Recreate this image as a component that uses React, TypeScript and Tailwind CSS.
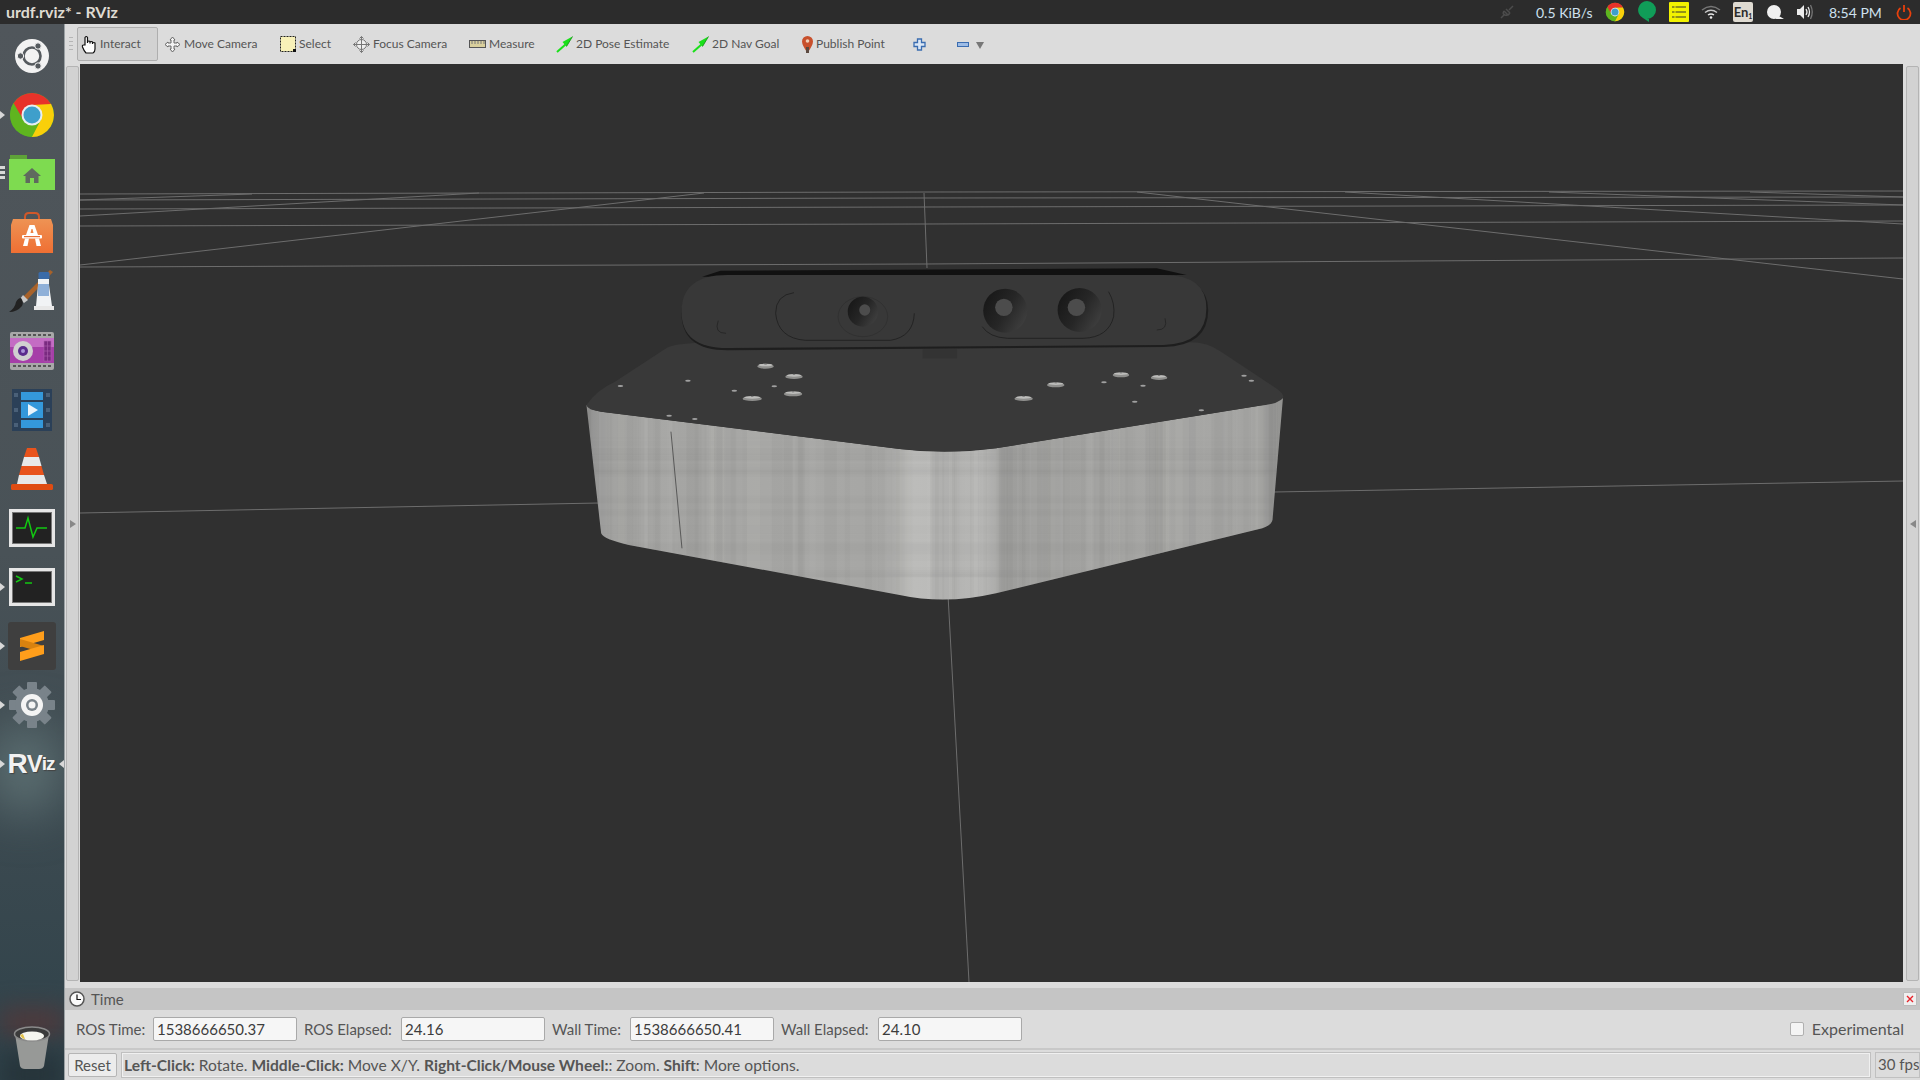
import { ReactNode } from "react";

const uiFont = "font-['Lato','Noto_Sans',sans-serif]";

function Pip({ className }: { className: string }) {
  return (
    <span
      className={`absolute w-0 h-0 border-y-[4px] border-y-transparent border-l-[5px] border-l-[#d8d8d8] ${className}`}
    />
  );
}

function ChromeIcon({ size }: { size: number }) {
  const red = "M24 14H43.6A22 22 0 0 0 5 13L15.3 29Z";
  return (
    <svg width={size} height={size} viewBox="0 0 48 48">
      <circle cx="24" cy="24" r="22" fill="#4caf2f" />
      <path d={red} fill="#e8322a" />
      <path d={red} fill="#f9cf0a" transform="rotate(120 24 24)" />
      <path d={red} fill="#5fb51f" transform="rotate(240 24 24)" />
      <circle cx="24" cy="24" r="10.5" fill="#e8eef2" />
      <circle cx="24" cy="24" r="8.5" fill="#3e9fcb" />
    </svg>
  );
}

function UbuntuIcon() {
  return (
    <svg width="36" height="36" viewBox="0 0 36 36">
      <circle cx="18" cy="18" r="17" fill="#f2f2f2" />
      <circle cx="18" cy="18" r="8.5" fill="none" stroke="#555a5e" strokeWidth="2.6" />
      <circle cx="6.5" cy="18" r="3.2" fill="#555a5e" stroke="#f2f2f2" />
      <circle cx="24" cy="8" r="3.2" fill="#555a5e" stroke="#f2f2f2" />
      <circle cx="24" cy="28" r="3.2" fill="#555a5e" stroke="#f2f2f2" />
    </svg>
  );
}

function FolderIcon() {
  return (
    <svg width="48" height="38" viewBox="0 0 48 38">
      <path d="M2 0H19V6H2Z" fill="#5ea238" />
      <rect x="1" y="4" width="46" height="31" fill="#7edb50" />
      <path d="M24 13L33 21H30.5V28H26V23H22V28H17.500V21H15Z" fill="#5f6b5e" />
    </svg>
  );
}

function BagIcon() {
  return (
    <svg width="44" height="44" viewBox="0 0 44 44">
      <path d="M15 12V6Q15 2 19 2H25Q29 2 29 6V12" fill="none" stroke="#d0582a" strokeWidth="2" />
      <path d="M3 8H41L43 14V42H1V14Z" fill="url(#bagFill)" />
      <path d="M19.500 14H24.500L28 24H16Z" fill="#fff" />
      <path d="M21.500 18H22.500L23.500 22H20.500Z" fill="#ee8446" />
      <rect x="12" y="24" width="20" height="3.500" rx="1" fill="#fff" />
      <rect x="14" y="25" width="16" height="1.200" fill="#e8703a" />
      <path d="M15 27.500H19L17.500 35H13Z" fill="#fff" />
      <path d="M25 27.500H29L31 35H26.500Z" fill="#fff" />
      <defs>
        <linearGradient id="bagFill" x1="0" y1="0" x2="0" y2="1">
          <stop offset="0" stopColor="#ee9354" />
          <stop offset="1" stopColor="#ef6f33" />
        </linearGradient>
      </defs>
    </svg>
  );
}

function PaintIcon() {
  return (
    <svg width="46" height="44" viewBox="0 0 46 44">
      <path d="M41 0L44 2L18 30L14 27Z" fill="#a8622a" />
      <path d="M14 25L19 30L15 33L11 29Z" fill="#c8c8c8" />
      <path d="M12 28Q15 32 13 36Q8 42 0 42Q6 38 7 32Q9 28 12 28Z" fill="#222" />
      <path d="M29 9H40V15L43 36H27L29 15Z" fill="#f1f3f5" />
      <rect x="29.500" y="2" width="11" height="7" rx="1.500" fill="#3a6ba8" />
      <rect x="29" y="14" width="11" height="12" fill="#8fb0d8" />
      <rect x="25" y="36" width="20" height="4" fill="#e8e8e8" />
    </svg>
  );
}

function CameraIcon() {
  const holes = [4, 9, 14, 19, 24, 29, 34, 39];
  return (
    <svg width="46" height="40" viewBox="0 0 46 40">
      <rect x="1" y="1" width="44" height="38" rx="2" fill="#a8a8a8" />
      <rect x="1" y="7" width="44" height="25" fill="#a63fa8" />
      <rect x="1" y="7" width="44" height="9" fill="#c46cc4" />
      {holes.map((x) => (
        <g key={x}>
          <rect x={x} y="3" width="3" height="2" fill="#555" />
          <rect x={x} y="34" width="3" height="2" fill="#555" />
        </g>
      ))}
      <circle cx="14" cy="20" r="10" fill="#d0d0d0" />
      <circle cx="14" cy="20" r="5" fill="#5a2c8c" />
      <circle cx="14" cy="20" r="2" fill="#a994d8" />
      <path d="M35 10H42V30H35ZM35 15H42M35 20H42M35 25H42M38.500 10V30" fill="#7a2a80" stroke="#b060b0" strokeWidth="0.600" />
    </svg>
  );
}

function VideoIcon() {
  return (
    <svg width="40" height="42" viewBox="0 0 40 42">
      <rect width="40" height="42" fill="#2b4058" />
      <rect x="9" y="3" width="22" height="8" fill="#3498db" />
      <rect x="9" y="13" width="22" height="16" fill="#3498db" />
      <rect x="9" y="31" width="22" height="8" fill="#3498db" />
      <path d="M16 15L26 21L16 27Z" fill="#eaf4fb" />
      <rect x="2" y="4" width="4" height="4" fill="#4a6078" />
      <rect x="2" y="19" width="4" height="4" fill="#4a6078" />
      <rect x="2" y="34" width="4" height="4" fill="#4a6078" />
      <rect x="34" y="4" width="4" height="4" fill="#4a6078" />
      <rect x="34" y="19" width="4" height="4" fill="#4a6078" />
      <rect x="34" y="34" width="4" height="4" fill="#4a6078" />
    </svg>
  );
}

function ConeIcon() {
  return (
    <svg width="44" height="44" viewBox="0 0 44 44">
      <path d="M17 1H26L29 10H14Z" fill="#e8531c" />
      <path d="M14 10H29L31.500 19H11.500Z" fill="#e8e8e8" />
      <path d="M11.500 19H31.500L34 28H9Z" fill="#e8531c" />
      <path d="M9 28H34L37 37H7Z" fill="#e8e8e8" />
      <rect x="1" y="37" width="42" height="6" rx="1.500" fill="#e04c12" />
    </svg>
  );
}

function MonitorIcon() {
  return (
    <svg width="46" height="38" viewBox="0 0 46 38">
      <rect x="1.500" y="1.500" width="43" height="35" fill="#222" stroke="#e6e6e6" strokeWidth="3" />
      <rect x="3.500" y="3.500" width="39" height="31" fill="none" stroke="#777" />
      <path d="M7 19H16L19 9L24 28L28 19H38" fill="none" stroke="#12c812" strokeWidth="1.500" />
    </svg>
  );
}

function TerminalIcon() {
  return (
    <svg width="46" height="38" viewBox="0 0 46 38">
      <rect x="1.500" y="1.500" width="43" height="35" fill="#222" stroke="#e6e6e6" strokeWidth="3" />
      <rect x="3.500" y="3.500" width="39" height="31" fill="none" stroke="#777" />
      <path d="M7 8L13 11L7 14" fill="none" stroke="#12c812" strokeWidth="1.500" />
      <path d="M16 15H23" stroke="#12c812" strokeWidth="1.500" />
    </svg>
  );
}

function SublimeIcon() {
  return (
    <svg width="48" height="48" viewBox="0 0 48 48">
      <rect width="48" height="48" rx="3" fill="#3f3f3f" />
      <path d="M12 16L36 9V18L12 25Z" fill="#ff9e1b" />
      <path d="M12 24L36 31V24L12 17Z" fill="#d9820f" />
      <path d="M12 30L36 23V32L12 39Z" fill="#ff9e1b" />
    </svg>
  );
}

function GearIcon() {
  const teeth = [0, 45, 90, 135, 180, 225, 270, 315];
  return (
    <svg width="46" height="46" viewBox="0 0 46 46">
      {teeth.map((deg) => (
        <rect key={deg} x="18" y="0" width="10" height="12" rx="1" fill="#79838a" transform={`rotate(${deg} 23 23)`} />
      ))}
      <circle cx="23" cy="23" r="17" fill="#79838a" />
      <circle cx="23" cy="23" r="11" fill="#f4f4f4" />
      <circle cx="23" cy="23" r="6" fill="#79838a" />
      <circle cx="23" cy="23" r="3.500" fill="#f4f4f4" />
    </svg>
  );
}

function TrashIcon() {
  return (
    <svg width="38" height="44" viewBox="0 0 38 44">
      <path d="M2 8L7 40Q8 43 12 43H26Q30 43 31 40L36 8Z" fill="#979997" />
      <ellipse cx="19" cy="8" rx="17.500" ry="7" fill="#3b3b3b" stroke="#8a8a8a" strokeWidth="1.500" />
      <ellipse cx="19" cy="10" rx="12" ry="4.500" fill="#f6f6f0" />
      <path d="M7 9Q9 13 12 13L10 8Z" fill="#e3c24a" />
    </svg>
  );
}

const launcher: { icon: ReactNode; pip?: string }[] = [
  { icon: <UbuntuIcon /> },
  { icon: <ChromeIcon size={48} />, pip: "single" },
  { icon: <FolderIcon />, pip: "multi" },
  { icon: <BagIcon /> },
  { icon: <PaintIcon /> },
  { icon: <CameraIcon /> },
  { icon: <VideoIcon /> },
  { icon: <ConeIcon /> },
  { icon: <MonitorIcon /> },
  { icon: <TerminalIcon />, pip: "single" },
  { icon: <SublimeIcon />, pip: "single" },
  { icon: <GearIcon />, pip: "single" },
];

function Launcher() {
  return (
    <aside className="relative w-[65px] shrink-0 overflow-hidden bg-gradient-to-b from-[#50565b] via-[#495257] to-[#2f424a] border-r border-[#9aa0a3]">
      <div className="absolute left-[-10px] top-[700px] w-[70px] h-[90px] rounded-full bg-[#5c6f72] blur-xl" />
      <div className="absolute left-0 top-[985px] w-[65px] h-[26px] bg-[#51383a] blur-md" />
      <div className="absolute left-0 top-[1030px] w-[65px] h-[40px] bg-[#26343a] blur-md" />
      <div className="relative flex flex-col pt-[2px]">
        {launcher.map((item, i) => (
          <div key={i} className="relative h-[59px] flex items-center justify-center">
            {item.pip === "single" && <Pip className="left-0 top-[26px]" />}
            {item.pip === "multi" && (
              <>
                <span className="absolute left-0 top-[22px] w-[5px] h-[3px] bg-[#d8d8d8]" />
                <span className="absolute left-0 top-[27px] w-[5px] h-[3px] bg-[#d8d8d8]" />
                <span className="absolute left-0 top-[32px] w-[5px] h-[3px] bg-[#d8d8d8]" />
              </>
            )}
            {item.icon}
          </div>
        ))}
        <div className="relative h-[59px] flex items-center justify-center pr-[2px]">
          <Pip className="left-0 top-[26px]" />
          <span className="font-['Liberation_Sans',sans-serif] font-bold leading-none text-[#f2f2f2] tracking-[-1px] [text-shadow:1px_1px_1px_#444] flex items-center">
            <span className="text-[28px]">R</span>
            <span className="text-[24px]">V</span>
            <span className="text-[19px]">iz</span>
          </span>
          <span className="absolute right-0 top-[26px] w-0 h-0 border-y-[4px] border-y-transparent border-r-[5px] border-r-[#d8d8d8]" />
        </div>
      </div>
      <div className="absolute left-[13px] bottom-[10px]">
        <TrashIcon />
      </div>
    </aside>
  );
}

function TopBar() {
  return (
    <header className={`h-[24px] bg-[#2c2c2c] flex items-center text-[#dfdbd2] ${uiFont}`}>
      <span className="ml-[6px] font-bold text-[16px]">urdf.rviz* - RViz</span>
      <div className="ml-auto flex items-center">
        <svg width="16" height="16" viewBox="0 0 16 16" className="mr-[21px]">
          <path d="M2 14L6 10M10 6L14 2M5 7L9 11M7 5L11 9M5 7Q3 10 6 11Q9 12 11 9" fill="none" stroke="#4c4c4c" strokeWidth="1.500" />
        </svg>
        <span className="w-[69px] text-[14px] text-[#cfe0ee]">0.5 KiB/s</span>
        <ChromeIcon size={20} />
        <svg width="18" height="22" viewBox="0 0 18 22" className="ml-[13px]">
          <path d="M9 0A9 9 0 1 1 9 18H11V21L5 17A9 9 0 0 1 9 0Z" fill="#109d58" />
        </svg>
        <svg width="20" height="20" viewBox="0 0 20 20" className="ml-[13px]">
          <rect width="20" height="20" rx="1" fill="#f2f200" />
          <path d="M3 5H17M3 10H17M3 15H17" stroke="#333" strokeWidth="1.200" />
          <path d="M6 3V17" stroke="#f2f200" strokeWidth="1" />
        </svg>
        <svg width="20" height="14" viewBox="0 0 20 14" className="ml-[12px]">
          <path d="M1 5Q10 -2 19 5" fill="none" stroke="#777" strokeWidth="1.500" />
          <path d="M4 7.500Q10 3 16 7.500" fill="none" stroke="#c8c8c8" strokeWidth="1.500" />
          <path d="M7 10Q10 8 13 10" fill="none" stroke="#e8e8e8" strokeWidth="1.500" />
          <circle cx="10" cy="12.500" r="1.300" fill="#eee" />
        </svg>
        <span className="ml-[12px] w-[20px] h-[20px] rounded-[2px] bg-[#dfdbd2] text-[#2c2c2c] text-[13px] font-bold leading-[20px] text-center">
          En<sub className="text-[7px]">1</sub>
        </span>
        <svg width="18" height="16" viewBox="0 0 18 16" className="ml-[13px]">
          <path d="M8 1A7 7 0 1 1 8 15A7 7 0 0 1 8 1ZM13 12L18 15H10Z" fill="#f0f0f0" />
        </svg>
        <svg width="18" height="16" viewBox="0 0 18 16" className="ml-[12px]">
          <path d="M1 5H4L8 1V15L4 11H1Z" fill="#ececec" />
          <path d="M10 5Q12 8 10 11M12 3Q15 8 12 13" fill="none" stroke="#ececec" strokeWidth="1.300" />
          <path d="M14.500 1Q18 8 14.500 15" fill="none" stroke="#777" strokeWidth="1.300" />
        </svg>
        <span className="ml-[15px] w-[67px] text-[14px] text-[#cfe0ee]">8:54 PM</span>
        <svg width="16" height="16" viewBox="0 0 16 16" className="mr-[8px]">
          <path d="M4.500 4A6.500 6.500 0 1 0 11.500 4" fill="none" stroke="#e8400c" strokeWidth="1.800" />
          <path d="M8 1V8" stroke="#e8400c" strokeWidth="1.800" />
        </svg>
      </div>
    </header>
  );
}

function HandIcon() {
  return (
    <svg width="17" height="19" viewBox="0 0 17 19">
      <path
        d="M4 10V2.500Q5.300 0.500 6.500 2.500V8V6.500Q8 5.500 9 6.500V8.500V7Q10.500 6 11.500 7V9V8Q13 7 14 8V14Q14 17 12 18H5Q3 16 1.500 12Q1 10 2.500 10Z"
        fill="#fff"
        stroke="#111"
        strokeWidth="1.200"
      />
    </svg>
  );
}

function MoveIcon() {
  return (
    <svg width="17" height="17" viewBox="0 0 17 17" fill="none" stroke="#666" strokeWidth="1">
      <path d="M8.500 1L11 4H10V7H13V6L16 8.500L13 11V10H10V13H11L8.500 16L6 13H7V10H4V11L1 8.500L4 6V7H7V4H6Z" fill="#f3f3f3" />
    </svg>
  );
}

function SelectIcon() {
  return (
    <svg width="16" height="16" viewBox="0 0 16 16">
      <rect x="0.500" y="0.500" width="15" height="15" fill="#f8f1b8" stroke="#222" strokeDasharray="2 1" />
      <rect x="13" y="13" width="3" height="3" fill="#111" />
    </svg>
  );
}

function FocusIcon() {
  return (
    <svg width="17" height="17" viewBox="0 0 17 17" fill="none" stroke="#777" strokeWidth="1">
      <circle cx="8.500" cy="8.500" r="5" fill="#efefef" />
      <path d="M8.500 0.500V16.500M0.500 8.500H16.500" />
      <path d="M6.500 2.500L8.500 0.500L10.500 2.500M6.500 14.500L8.500 16.500L10.500 14.500M2.500 6.500L0.500 8.500L2.500 10.500M14.500 6.500L16.500 8.500L14.500 10.500" />
    </svg>
  );
}

function RulerIcon() {
  return (
    <svg width="17" height="8" viewBox="0 0 17 8">
      <rect x="0.500" y="0.500" width="16" height="7" fill="#d9cf9c" stroke="#555" />
      <path d="M3 1V4M6 1V4M9 1V4M12 1V4M15 1V4" stroke="#777" />
    </svg>
  );
}

function ArrowIcon() {
  return (
    <svg width="17" height="17" viewBox="0 0 17 17">
      <path d="M1 16L9.500 8.500" stroke="#19e019" strokeWidth="2" />
      <path d="M16.500 0.500L6.500 6L10.500 10.500Z" fill="#19e019" />
      <path d="M16.500 0.500L10.500 10.500" stroke="#118a11" strokeWidth="0.800" />
    </svg>
  );
}

function PinIcon() {
  return (
    <svg width="11" height="17" viewBox="0 0 11 17">
      <path d="M5.500 0A5.500 5.500 0 0 1 11 5.500Q11 9 5.500 17Q0 9 0 5.500A5.500 5.500 0 0 1 5.500 0Z" fill="#c8502c" />
      <path d="M5.500 11V17" stroke="#5c4a40" strokeWidth="3" />
      <circle cx="5.500" cy="5" r="1.800" fill="#f0d0b8" />
    </svg>
  );
}

const tools = [
  { label: "Move Camera", icon: <MoveIcon />, width: "w-[116px]" },
  { label: "Select", icon: <SelectIcon />, width: "w-[73px]" },
  { label: "Focus Camera", icon: <FocusIcon />, width: "w-[116px]" },
  { label: "Measure", icon: <RulerIcon />, width: "w-[87px]" },
  { label: "2D Pose Estimate", icon: <ArrowIcon />, width: "w-[136px]" },
  { label: "2D Nav Goal", icon: <ArrowIcon />, width: "w-[110px]" },
  { label: "Publish Point", icon: <PinIcon />, width: "w-[111px]" },
];

function Toolbar() {
  return (
    <div className={`h-[40px] bg-[#dcdcdc] flex items-center text-[12px] text-[#555] ${uiFont}`}>
      <div className="ml-[4px] w-[4px] h-[14px] bg-[repeating-linear-gradient(#b5b5b5_0_1px,transparent_1px_4px)]" />
      <button className="ml-[4px] mr-[2px] w-[81px] h-[34px] flex items-center gap-[2px] pl-[3px] bg-[#d2d2d2] border border-[#aeaeae] rounded-[2px]">
        <HandIcon />
        Interact
      </button>
      {tools.map((tool) => (
        <button key={tool.label} className={`${tool.width} h-[34px] flex items-center gap-[3px] pl-[4px] whitespace-nowrap`}>
          {tool.icon}
          {tool.label}
        </button>
      ))}
      <span className="w-[44px] pl-[4px]">
        <svg width="13" height="13" viewBox="0 0 13 13" className="block">
          <path d="M4.500 1H8.500V4.500H12V8.500H8.500V12H4.500V8.500H1V4.500H4.500Z" fill="#dbe7f6" stroke="#3a6cb0" strokeWidth="1.300" />
        </svg>
      </span>
      <span className="pl-[4px] flex items-center gap-[7px]">
        <svg width="12" height="5" viewBox="0 0 12 5" className="block">
          <rect x="0.500" y="0.500" width="11" height="4" fill="#9dbce6" stroke="#3a6cb0" />
        </svg>
        <span className="mt-[2px] w-0 h-0 border-x-[4px] border-x-transparent border-t-[7px] border-t-[#777]" />
      </span>
    </div>
  );
}

const screws = [
  [428, 347, 18], [490, 378, 19], [488, 430, 20], [399, 444, 21], [1202, 373, 18],
  [1285, 381, 18], [1060, 403, 19], [990, 444, 20],
];
const dots = [
  [112, 408], [259, 392], [360, 422], [447, 409], [218, 497], [274, 507],
  [1470, 377], [1486, 392], [1165, 397], [1250, 407], [1232, 455], [1377, 481],
];

// pseudo random streaks for the brushed look of the box side
const streaks = Array.from({ length: 140 }, (_, i) => {
  const a = Math.abs(Math.sin(i * 12.9898) * 43758.5453) % 1;
  const b = Math.abs(Math.sin(i * 78.233) * 12543.123) % 1;
  return { x: 40 + a * 1500, w: 5 + b * 26, dark: i % 2 === 0, o: 0.02 + b * 0.05 };
});
const bands = Array.from({ length: 24 }, (_, i) => {
  const a = Math.abs(Math.sin(i * 31.7) * 9182.3) % 1;
  const b = Math.abs(Math.sin(i * 5.3) * 7719.1) % 1;
  return { y: 560 + a * 440, h: 8 + b * 24, o: 0.008 + b * 0.02 };
});

function Scene() {
  const line = "#6d6d6d";
  const gridLines = [
    [81, 194, 925, 192], [925, 192, 1904, 191],
    [81, 200, 925, 198], [925, 198, 1904, 197],
    [81, 209, 925, 207], [925, 207, 1904, 205],
    [81, 226, 925, 224], [925, 224, 1904, 221],
    [81, 267, 925, 264], [925, 264, 1904, 258],
    [81, 200, 253, 194], [81, 216, 480, 193], [81, 265, 705, 193],
    [1138, 192, 1904, 279], [1346, 192, 1904, 224], [1550, 192, 1904, 205], [1751, 192, 1904, 197],
    [925, 193, 928, 268],
    [81, 513, 600, 503], [1275, 492, 1904, 481],
    [949, 595, 970, 982],
  ];
  return (
    <svg viewBox="81 64 1823 918" className="block w-full h-full">
      <defs>
        <linearGradient id="sideFill" x1="0" y1="0" x2="1" y2="0">
          <stop offset="0" stopColor="#8d8d8c" />
          <stop offset="0.04" stopColor="#a3a3a1" />
          <stop offset="0.3" stopColor="#a9a9a7" />
          <stop offset="0.44" stopColor="#a6a6a4" />
          <stop offset="0.47" stopColor="#bcbcba" />
          <stop offset="0.56" stopColor="#b9b9b7" />
          <stop offset="0.6" stopColor="#a0a09e" />
          <stop offset="0.95" stopColor="#a8a8a6" />
          <stop offset="1" stopColor="#8c8c8b" />
        </linearGradient>
        <linearGradient id="lens" x1="0" y1="0" x2="1" y2="0.6">
          <stop offset="0" stopColor="#141414" />
          <stop offset="0.6" stopColor="#262626" />
          <stop offset="1" stopColor="#3c3c3c" />
        </linearGradient>
        <clipPath id="sideClip">
          <path d="M38 465L70 850Q75 868 130 885L720 1035Q820 1065 930 1030L1510 835Q1530 825 1532 810L1555 440Q1540 460 1500 468L930 595Q820 615 720 597L70 485Q45 480 38 465Z" />
        </clipPath>
      </defs>
      {gridLines.map(([x1, y1, x2, y2], i) => (
        <line key={i} x1={x1} y1={y1} x2={x2} y2={y2} stroke={line} strokeWidth="1" />
      ))}
      {/* drawn in the coordinates of a crop of the model, squeezed back to screen */}
      <g transform="translate(570 250) scale(0.4592 0.3333)">
        <path d="M38 465L70 850Q75 868 130 885L720 1035Q820 1065 930 1030L1510 835Q1530 825 1532 810L1555 440Q1540 460 1500 468L930 595Q820 615 720 597L70 485Q45 480 38 465Z" fill="url(#sideFill)" />
        <g clipPath="url(#sideClip)">
          {streaks.map((s, i) => (
            <rect key={i} x={s.x} y="440" width={s.w} height="640" fill={s.dark ? "#6e6e6e" : "#dadad8"} opacity={s.o} />
          ))}
          {bands.map((b, i) => (
            <rect key={i} x="0" y={b.y} width="1600" height={b.h} fill="#777" opacity={b.o} />
          ))}
          <path d="M222 545L246 895" stroke="#444" strokeWidth="2" />
        </g>
        <path d="M38 465Q60 420 100 395L215 292Q240 278 300 278H1340Q1385 272 1420 305L1540 415Q1565 440 1550 450Q1535 465 1500 468L930 595Q820 612 720 597L70 485Q40 480 38 465Z" fill="#393939" />
        {dots.map(([x, y], i) => (
          <ellipse key={i} cx={x} cy={y} rx="6" ry="3" fill="#a0a0a0" />
        ))}
        {screws.map(([x, y, r], i) => (
          <g key={i}>
            <ellipse cx={x} cy={y + 2} rx={r} ry="7" fill="#8f8f8d" />
            <ellipse cx={x} cy={y - 2} rx={r * 0.85} ry="4" fill="#bdbdbb" />
            <ellipse cx={x} cy={y - 5} rx="3" ry="1.500" fill="#6a6a6a" />
          </g>
        ))}
        <path d="M770 298H845V325H770Z" fill="#333" />
        <path d="M290 80L330 62L1280 55L1345 75Z" fill="#111" />
        <path d="M345 85H1295Q1392 85 1392 180Q1392 288 1295 291L345 301Q245 301 245 190Q245 85 345 85Z" fill="#1e1e1e" />
        <path d="M345 75H1295Q1388 75 1388 175Q1388 282 1295 285L345 294Q245 294 245 185Q245 75 345 75Z" fill="#383838" />
        <path d="M490 128Q450 135 450 190Q455 265 515 271H700Q750 260 752 190" fill="none" stroke="#1d1d1d" strokeWidth="2" />
        <path d="M1175 125Q1190 160 1186 200Q1175 262 1120 265H955Q915 262 900 230" fill="none" stroke="#1d1d1d" strokeWidth="2" />
        <ellipse cx="640" cy="200" rx="54" ry="60" fill="none" stroke="#2c2c2c" strokeWidth="1.500" />
        <ellipse cx="640" cy="185" rx="33" ry="45" fill="url(#lens)" />
        <ellipse cx="644" cy="180" rx="12" ry="17" fill="#4c4c4c" />
        <ellipse cx="950" cy="182" rx="48" ry="66" fill="url(#lens)" />
        <ellipse cx="947" cy="172" rx="19" ry="26" fill="#4c4c4c" />
        <ellipse cx="1112" cy="180" rx="48" ry="66" fill="url(#lens)" />
        <ellipse cx="1105" cy="172" rx="19" ry="26" fill="#4c4c4c" />
        <path d="M325 212Q315 250 342 250" fill="none" stroke="#222" strokeWidth="2" />
        <path d="M1298 205Q1305 240 1280 240" fill="none" stroke="#222" strokeWidth="2" />
      </g>
    </svg>
  );
}

function TimeField({ label, value, labelClass, inputClass }: { label: string; value: string; labelClass: string; inputClass: string }) {
  return (
    <>
      <span className={`${labelClass} whitespace-nowrap`}>{label}</span>
      <span className={`${inputClass} h-[24px] bg-[#f6f6f6] border border-[#a9a9a9] rounded-[2px] pl-[3px] leading-[22px] text-[#3c3c3c]`}>
        {value}
      </span>
    </>
  );
}

function TimePanel() {
  return (
    <div className={`h-[98px] bg-[#dcdcdc] text-[15px] text-[#555] ${uiFont}`}>
      <div className="h-[6px]" />
      <div className="h-[22px] bg-[#c5c5c5] flex items-center pl-[4px] pr-[3px]">
        <svg width="16" height="16" viewBox="0 0 16 16">
          <circle cx="8" cy="8" r="7" fill="#fafafa" stroke="#555" strokeWidth="1.500" />
          <path d="M8 3.500V8.500H12" fill="none" stroke="#111" strokeWidth="1.200" />
        </svg>
        <span className="ml-[6px]">Time</span>
        <span className="ml-auto w-[14px] h-[14px] bg-[#efefef] border border-[#bbb] flex items-center justify-center rounded-[1px]">
          <svg width="8" height="8" viewBox="0 0 8 8">
            <path d="M1 1L7 7M7 1L1 7" stroke="#e8232a" strokeWidth="1.400" />
          </svg>
        </span>
      </div>
      <div className="h-[40px] flex items-center pl-[11px] pr-[16px] border-b-2 border-[#c8c8c8]">
        <TimeField label="ROS Time:" value="1538666650.37" labelClass="w-[77px]" inputClass="w-[144px]" />
        <TimeField label="ROS Elapsed:" value="24.16" labelClass="ml-[7px] w-[97px]" inputClass="w-[144px]" />
        <TimeField label="Wall Time:" value="1538666650.41" labelClass="ml-[7px] w-[78px]" inputClass="w-[144px]" />
        <TimeField label="Wall Elapsed:" value="24.10" labelClass="ml-[7px] w-[97px]" inputClass="w-[144px]" />
        <span className="ml-auto w-[14px] h-[14px] bg-[#f4f4f4] border border-[#b0b0b0] rounded-[2px]" />
        <span className="ml-[8px] text-[16px]">Experimental</span>
      </div>
      <div className="h-[30px] flex items-center pl-[3px] gap-[4px]">
        <span className="w-[49px] h-[24px] bg-[#ececec] border border-[#b5b5b5] rounded-[2px] text-center leading-[22px]">Reset</span>
        <div className="w-[1750px] h-[26px] border border-[#c0c0c0] shadow-[inset_0_0_0_1px_#f0f0f0] pl-[2px] text-[15.6px] leading-[24px] whitespace-nowrap">
          <b>Left-Click:</b> Rotate. <b>Middle-Click:</b> Move X/Y. <b>Right-Click/Mouse Wheel:</b>: Zoom. <b>Shift</b>: More options.
        </div>
        <div className="flex-1 h-[26px] border border-[#c0c0c0] pl-[2px] leading-[22px] whitespace-nowrap overflow-hidden">30 fps</div>
      </div>
    </div>
  );
}

function SideStrip({ dir }: { dir: "left" | "right" }) {
  return (
    <div className="w-[15px] shrink-0 bg-[#dcdcdc] flex pt-[2px] pb-[1px] px-[1px]">
      <div className="flex-1 bg-[#d2d2d2] border border-[#b4b4b4] rounded-[2px] flex items-center justify-center">
        {dir === "left" ? (
          <span className="w-0 h-0 border-y-[4px] border-y-transparent border-l-[6px] border-l-[#888]" />
        ) : (
          <span className="w-0 h-0 border-y-[4px] border-y-transparent border-r-[6px] border-r-[#888]" />
        )}
      </div>
    </div>
  );
}

export default function App() {
  return (
    <div className="w-[1920px] h-[1080px] overflow-hidden flex flex-col bg-[#dcdcdc]">
      <TopBar />
      <div className="flex-1 flex min-h-0">
        <Launcher />
        <div className="flex-1 flex flex-col min-w-0">
          <Toolbar />
          <div className="flex-1 flex min-h-0">
            <SideStrip dir="left" />
            <div className="w-[1823px] bg-[#303030]">
              <Scene />
            </div>
            <div className="w-[2px] bg-[#dcdcdc]" />
            <SideStrip dir="right" />
          </div>
          <TimePanel />
        </div>
      </div>
    </div>
  );
}
